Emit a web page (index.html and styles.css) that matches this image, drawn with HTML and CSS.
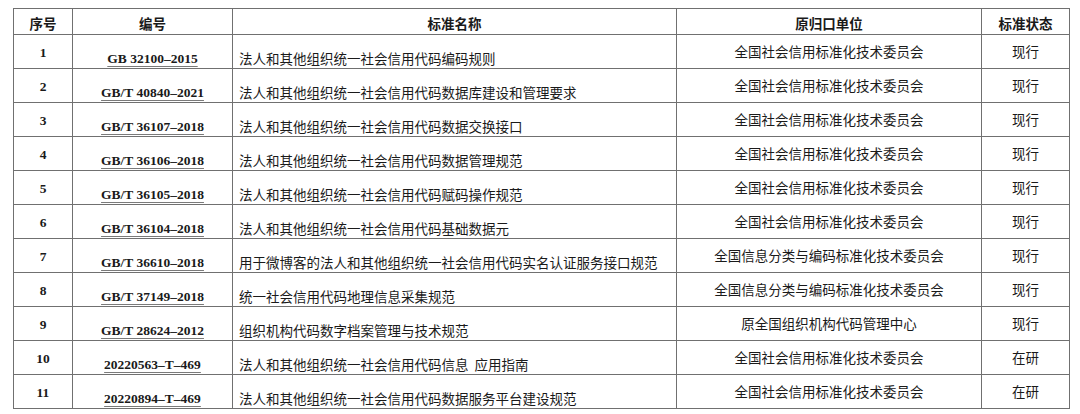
FILE: index.html
```html
<!DOCTYPE html>
<html lang="zh-CN">
<head>
<meta charset="utf-8">
<title>标准列表</title>
<link rel="stylesheet" href="styles.css">
</head>
<body>
<table class="std">
  <colgroup>
    <col class="c-no"><col class="c-code"><col class="c-name"><col class="c-unit"><col class="c-state">
  </colgroup>
  <thead>
    <tr><th>序号</th><th>编号</th><th>标准名称</th><th>原归口单位</th><th>标准状态</th></tr>
  </thead>
  <tbody>
    <tr><td class="no">1</td><td class="code"><span>GB 32100–2015</span></td><td class="name">法人和其他组织统一社会信用代码编码规则</td><td class="unit">全国社会信用标准化技术委员会</td><td class="state">现行</td></tr>
    <tr><td class="no">2</td><td class="code"><span>GB/T 40840–2021</span></td><td class="name">法人和其他组织统一社会信用代码数据库建设和管理要求</td><td class="unit">全国社会信用标准化技术委员会</td><td class="state">现行</td></tr>
    <tr><td class="no">3</td><td class="code"><span>GB/T 36107–2018</span></td><td class="name">法人和其他组织统一社会信用代码数据交换接口</td><td class="unit">全国社会信用标准化技术委员会</td><td class="state">现行</td></tr>
    <tr><td class="no">4</td><td class="code"><span>GB/T 36106–2018</span></td><td class="name">法人和其他组织统一社会信用代码数据管理规范</td><td class="unit">全国社会信用标准化技术委员会</td><td class="state">现行</td></tr>
    <tr><td class="no">5</td><td class="code"><span>GB/T 36105–2018</span></td><td class="name">法人和其他组织统一社会信用代码赋码操作规范</td><td class="unit">全国社会信用标准化技术委员会</td><td class="state">现行</td></tr>
    <tr><td class="no">6</td><td class="code"><span>GB/T 36104–2018</span></td><td class="name">法人和其他组织统一社会信用代码基础数据元</td><td class="unit">全国社会信用标准化技术委员会</td><td class="state">现行</td></tr>
    <tr><td class="no">7</td><td class="code"><span>GB/T 36610–2018</span></td><td class="name">用于微博客的法人和其他组织统一社会信用代码实名认证服务接口规范</td><td class="unit">全国信息分类与编码标准化技术委员会</td><td class="state">现行</td></tr>
    <tr><td class="no">8</td><td class="code"><span>GB/T 37149–2018</span></td><td class="name">统一社会信用代码地理信息采集规范</td><td class="unit">全国信息分类与编码标准化技术委员会</td><td class="state">现行</td></tr>
    <tr><td class="no">9</td><td class="code"><span>GB/T 28624–2012</span></td><td class="name">组织机构代码数字档案管理与技术规范</td><td class="unit">原全国组织机构代码管理中心</td><td class="state">现行</td></tr>
    <tr><td class="no">10</td><td class="code"><span>20220563–T–469</span></td><td class="name">法人和其他组织统一社会信用代码信息&nbsp;&nbsp;应用指南</td><td class="unit">全国社会信用标准化技术委员会</td><td class="state">在研</td></tr>
    <tr><td class="no">11</td><td class="code"><span>20220894–T–469</span></td><td class="name">法人和其他组织统一社会信用代码数据服务平台建设规范</td><td class="unit">全国社会信用标准化技术委员会</td><td class="state">在研</td></tr>
  </tbody>
</table>
</body>
</html>
```

FILE: styles.css
```css
html, body {
  margin: 0;
  background: #ffffff;
}
body {
  padding: 8px 0 0 13px;
  font-family: "Liberation Serif", "Noto Sans CJK SC", serif;
  color: #1a1a1a;
}
.std {
  border-collapse: collapse;
  table-layout: fixed;
  width: 1056px;
  font-size: 13.5px;
}
.c-no { width: 59px; }
.c-code { width: 160px; }
.c-name { width: 444px; }
.c-unit { width: 305px; }
.c-state { width: 88px; }

.std th, .std td {
  border: 1px solid #707070;
  padding: 0;
  line-height: 16px;
  vertical-align: top;
  overflow: hidden;
  white-space: nowrap;
}
.std th {
  height: 26px;
  padding-top: 6px;
  box-sizing: border-box;
  font-family: "Noto Sans CJK SC", sans-serif;
  font-weight: 700;
  text-align: center;
}
.std td {
  height: 34px;
  box-sizing: border-box;
}
.no {
  text-align: center;
  font-weight: 700;
  padding-top: 10px !important;
}
.code {
  text-align: center;
  font-weight: 700;
  padding-top: 16px !important;
}
.code span {
  text-decoration: underline;
  text-decoration-color: #7a7a7a;
  text-decoration-thickness: 1px;
  text-underline-offset: 3px;
}
.name {
  text-align: left;
  padding: 15px 0 0 6px !important;
  font-family: "Noto Sans CJK SC", sans-serif;
}
.unit {
  text-align: center;
  padding-top: 8px !important;
  font-family: "Noto Sans CJK SC", sans-serif;
}
.state {
  text-align: center;
  padding-top: 8px !important;
  font-family: "Noto Sans CJK SC", sans-serif;
}
```
